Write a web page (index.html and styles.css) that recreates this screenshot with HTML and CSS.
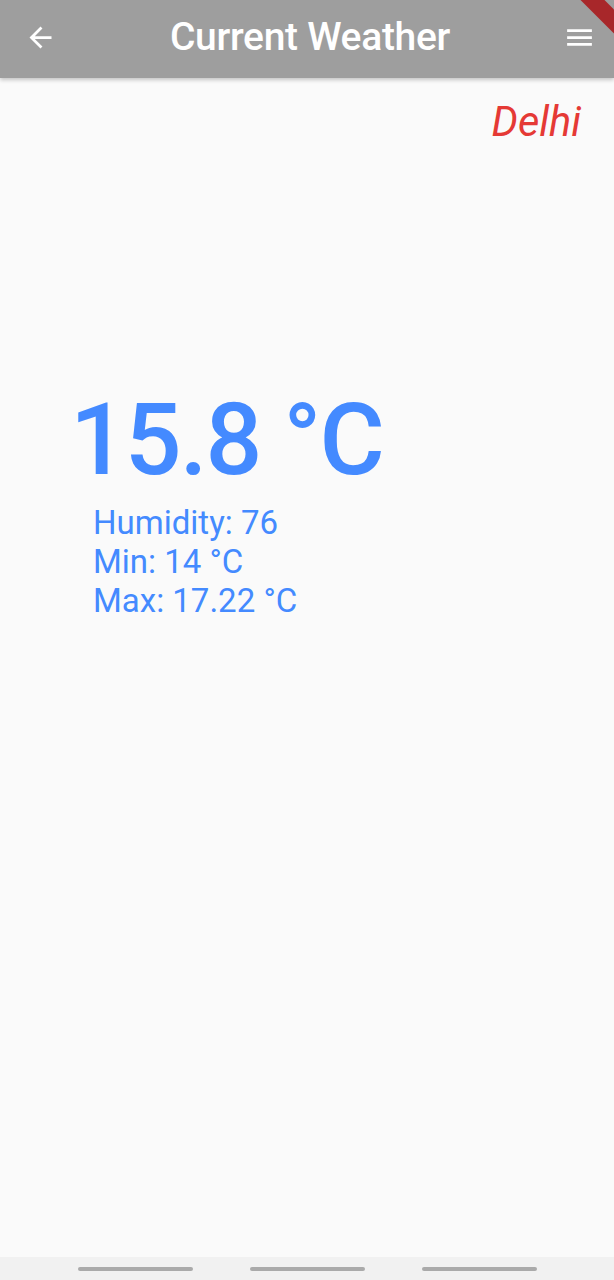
FILE: index.html
```html
<!DOCTYPE html>
<html>
<head>
<meta charset="utf-8">
<link rel="stylesheet" href="styles.css">
</head>
<body>
<div class="screen">
  <header class="appbar">
    <button class="icon-btn back" aria-label="Back">
      <svg width="24" height="24" viewBox="0 0 24 24"><path d="M20 11H7.83l5.59-5.59L12 4l-8 8 8 8 1.41-1.41L7.83 13H20v-2z" fill="#fff"/></svg>
    </button>
    <h1 class="title">Current Weather</h1>
    <button class="icon-btn menu" aria-label="Menu">
      <svg width="24" height="24" viewBox="0 0 24 24"><path d="M3 18h18v-2H3v2zm0-5h18v-2H3v2zm0-7v2h18V6H3z" fill="#fff"/></svg>
    </button>
    <div class="debug-banner"></div>
  </header>
  <main class="content">
    <div class="city">Delhi</div>
    <div class="weather">
      <div class="temp">15.8 °C</div>
      <div class="details">
        <div>Humidity: 76</div>
        <div>Min: 14 °C</div>
        <div>Max: 17.22 °C</div>
      </div>
    </div>
  </main>
  <footer class="navbar">
    <span class="pill"></span>
    <span class="pill"></span>
    <span class="pill"></span>
  </footer>
</div>
</body>
</html>
```
FILE: styles.css
```css
html, body {
  margin: 0;
  padding: 0;
}
body {
  background: #fafafa;
  font-family: Roboto, "Noto Sans", sans-serif;
}
.screen {
  width: 614px;
  height: 1280px;
  display: flex;
  flex-direction: column;
  overflow: hidden;
}
.appbar {
  position: relative;
  height: 78px;
  flex: none;
  background: #9e9e9e;
  display: flex;
  align-items: center;
  justify-content: space-between;
  padding: 0 10px 0 16px;
  box-shadow: 0 2px 4px rgba(0,0,0,0.22);
  z-index: 2;
  overflow: hidden;
}
.icon-btn {
  background: none;
  border: 0;
  padding: 0;
  width: 48px;
  height: 48px;
  display: flex;
  align-items: center;
  justify-content: center;
}
.icon-btn svg {
  width: 33px;
  height: 33px;
}
.back {
  margin-top: -4px;
}
.menu {
  margin-top: -4px;
}
.title {
  margin: 0 0 4px 0;
  color: #fff;
  font-size: 39px;
  font-weight: 500;
  letter-spacing: -0.3px;
}
.debug-banner {
  position: absolute;
  top: 2px;
  left: 553px;
  width: 100px;
  height: 17px;
  background: #a8272a;
  transform: rotate(45deg);
}
.content {
  flex: 1;
  display: flex;
  flex-direction: column;
}
.city {
  align-self: flex-end;
  margin: 23px 33px 0 0;
  color: #e53935;
  font-size: 41.5px;
  font-style: italic;
  line-height: 1;
}
.weather {
  margin-top: 247px;
  padding-left: 70px;
}
.temp {
  color: #448aff;
  font-size: 100px;
  font-weight: 500;
  line-height: 1;
  letter-spacing: -2px;
}
.details {
  margin-top: 13px;
  padding-left: 23px;
  color: #448aff;
  font-size: 33px;
  line-height: 39px;
}
.navbar {
  flex: none;
  height: 23px;
  background: #f1f1f1;
  display: flex;
  justify-content: center;
  align-items: center;
  gap: 57px;
}
.pill {
  width: 115px;
  height: 4px;
  border-radius: 2px;
  background: #aaa;
}
```
